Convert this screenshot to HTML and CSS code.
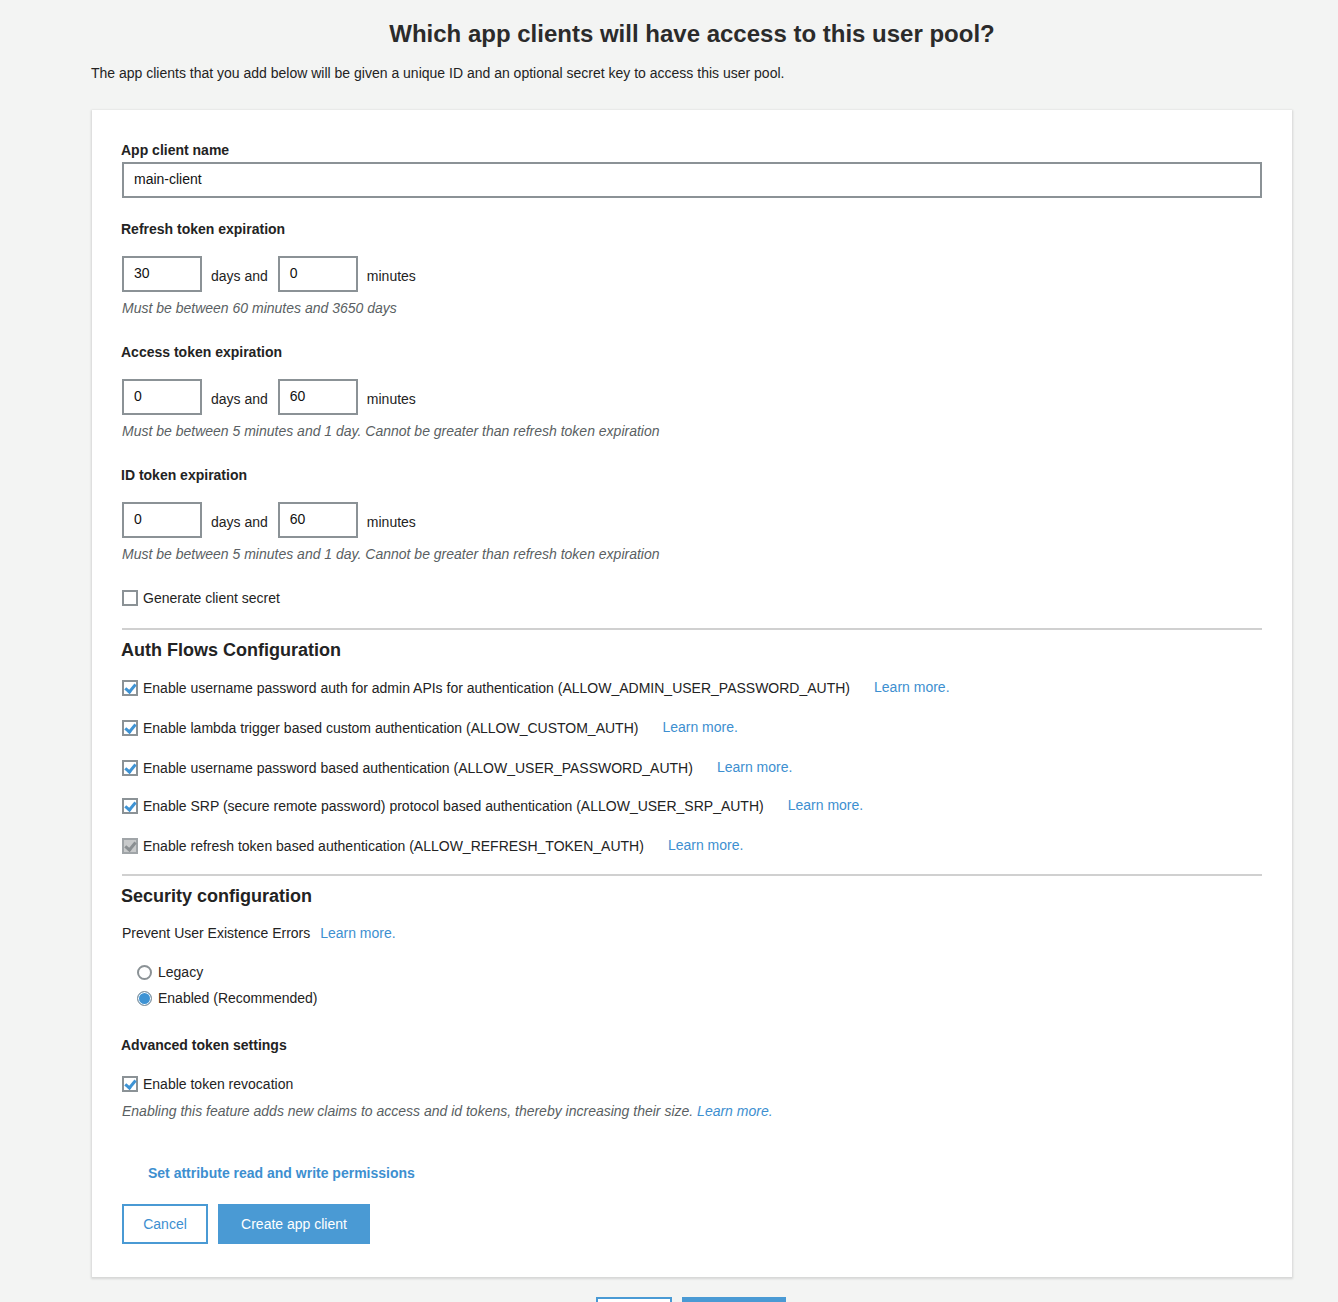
FILE: index.html
```html
<!DOCTYPE html>
<html>
    <head>
        <meta charset="UTF-8">
        <title>App clients</title>
        <link rel="stylesheet" href="styles.css">
    </head>
    <body>
        <div class="page">
            <h1 class="title">Which app clients will have access to this user pool?</h1>
            <p class="intro">The app clients that you add below will be given a unique ID and an optional secret key to access this user pool.</p>

            <div class="card">
                <div class="field first">
                    <div class="label">App client name</div>
                    <div class="textbox wide">main-client</div>
                </div>

                <div class="field">
                    <div class="label">Refresh token expiration</div>
                    <div class="duration">
                        <div class="textbox small">30</div>
                        <span>days and</span>
                        <div class="textbox small">0</div>
                        <span>minutes</span>
                    </div>
                    <div class="hint">Must be between 60 minutes and 3650 days</div>
                </div>

                <div class="field">
                    <div class="label">Access token expiration</div>
                    <div class="duration">
                        <div class="textbox small">0</div>
                        <span>days and</span>
                        <div class="textbox small">60</div>
                        <span>minutes</span>
                    </div>
                    <div class="hint">Must be between 5 minutes and 1 day. Cannot be greater than refresh token expiration</div>
                </div>

                <div class="field">
                    <div class="label">ID token expiration</div>
                    <div class="duration">
                        <div class="textbox small">0</div>
                        <span>days and</span>
                        <div class="textbox small">60</div>
                        <span>minutes</span>
                    </div>
                    <div class="hint">Must be between 5 minutes and 1 day. Cannot be greater than refresh token expiration</div>
                </div>

                <div class="check secret"><span class="box"></span>Generate client secret</div>

                <div class="section flows">
                    <h2>Auth Flows Configuration</h2>
                    <div class="flow"><div class="check"><span class="box on"></span>Enable username password auth for admin APIs for authentication (ALLOW_ADMIN_USER_PASSWORD_AUTH)</div><a class="link">Learn more.</a></div>
                    <div class="flow"><div class="check"><span class="box on"></span>Enable lambda trigger based custom authentication (ALLOW_CUSTOM_AUTH)</div><a class="link">Learn more.</a></div>
                    <div class="flow"><div class="check"><span class="box on"></span>Enable username password based authentication (ALLOW_USER_PASSWORD_AUTH)</div><a class="link">Learn more.</a></div>
                    <div class="flow tight"><div class="check"><span class="box on"></span>Enable SRP (secure remote password) protocol based authentication (ALLOW_USER_SRP_AUTH)</div><a class="link">Learn more.</a></div>
                    <div class="flow"><div class="check"><span class="box off"></span>Enable refresh token based authentication (ALLOW_REFRESH_TOKEN_AUTH)</div><a class="link">Learn more.</a></div>
                </div>

                <div class="section security">
                    <h2>Security configuration</h2>
                    <div class="prevent">Prevent User Existence Errors <a class="link">Learn more.</a></div>
                    <div class="radios">
                        <div class="radio"><span class="dot"></span>Legacy</div>
                        <div class="radio"><span class="dot on"></span>Enabled (Recommended)</div>
                    </div>
                    <div class="label advanced">Advanced token settings</div>
                    <div class="check revoke"><span class="box on"></span>Enable token revocation</div>
                    <div class="hint">Enabling this feature adds new claims to access and id tokens, thereby increasing their size. <a class="link">Learn more.</a></div>
                </div>

                <a class="perms">Set attribute read and write permissions</a>

                <div class="actions">
                    <button class="btn outline cancel">Cancel</button>
                    <button class="btn primary create">Create app client</button>
                </div>
            </div>

            <div class="pager">
                <button class="btn outline back">Back</button>
                <button class="btn primary next">Next step</button>
            </div>
        </div>
    </body>
</html>
```

FILE: styles.css
```css
body{
    margin: 0;
    background: #f3f4f3;
    font-family: "Liberation Sans", Arial, sans-serif;
    color: #232323;
    font-size: 14px;
}

.page{
    width: 1200px;
    margin-left: 92px;
}

.title{
    margin: 0;
    padding-top: 20px;
    text-align: center;
    font-size: 24px;
    font-weight: bold;
    color: #2b2b2b;
    line-height: 28px;
}

.intro{
    margin: 16px 0 0 -1px;
    font-size: 14px;
    line-height: 18px;
}

.card{
    margin-top: 28px;
    background: #fff;
    box-shadow: 0 1px 2px 1px rgba(0,0,0,0.12);
    padding: 31px 30px 33px 30px;
}

/* form fields */
.label{
    font-weight: bold;
    line-height: 18px;
    margin-left: -1px;
}

.field{
    margin-bottom: 26px;
}

.field.first{
    margin-bottom: 22px;
}

.textbox{
    box-sizing: border-box;
    height: 36px;
    border: 2px solid #8b9296;
    padding: 0 10px;
    line-height: 31px;
    font-size: 14px;
    color: #111;
}

.wide{
    margin-top: 3px;
    width: 1140px;
}

.duration{
    display: flex;
    align-items: center;
    margin-top: 18px;
}

.small{
    width: 80px;
    line-height: 30px;
}

.duration span{
    margin: 4px 10px 0 9px;
}

.hint{
    font-style: italic;
    color: #5a5f63;
    line-height: 18px;
    margin-top: 7px;
}

/* checkboxes */
.check{
    display: flex;
    align-items: center;
    line-height: 18px;
}

.box{
    box-sizing: border-box;
    width: 16px;
    height: 16px;
    border: 2px solid #8b9296;
    margin-right: 5px;
    position: relative;
    background: #fff;
    flex: none;
}

.box.on::after, .box.off::after{
    content: "";
    position: absolute;
    left: 3px;
    top: 0px;
    width: 4px;
    height: 8px;
    border: solid #3e93d4;
    border-width: 0 3px 3px 0;
    transform: rotate(40deg);
}

.box.off{
    background: #c8cacb;
    border-color: #a0a5a8;
}

.box.off::after{
    border-color: #8a8f92;
}

.secret{
    margin-top: 1px;
    padding-bottom: 21px;
    border-bottom: 2px solid #d0d0d0;
}

/* sections */
.section h2{
    margin: 0;
    font-size: 18px;
    line-height: 22px;
    padding-top: 9px;
    margin-left: -1px;
}

.flows{
    padding-bottom: 19px;
    border-bottom: 2px solid #d0d0d0;
}

.flow{
    display: flex;
    align-items: center;
    margin-top: 18px;
}

.flow + .flow{
    margin-top: 22px;
}

.flow.tight{
    margin-top: 20px;
}

.link{
    color: #3d8fd0;
    cursor: pointer;
    font-size: 14px;
}

.flow .link{
    margin-left: 24px;
    margin-top: -2px;
}

.prevent{
    margin-top: 17px;
    line-height: 18px;
}

.prevent .link{
    margin-left: 6px;
}

.radios{
    display: flex;
    flex-direction: column;
    gap: 8px;
    margin-top: 21px;
    margin-left: 15px;
}

.radio{
    display: flex;
    align-items: center;
    line-height: 18px;
}

.dot{
    box-sizing: border-box;
    width: 15px;
    height: 15px;
    border-radius: 50%;
    border: 2px solid #8b9296;
    margin-right: 6px;
    background: #fff;
}

.dot.on{
    background: #3e93d4;
    border-width: 1px;
    box-shadow: inset 0 0 0 1px #fff;
}

.advanced{
    margin-top: 29px;
}

.revoke{
    margin-top: 21px;
}

.security .hint{
    margin-top: 9px;
}

.perms{
    display: block;
    margin: 44px 0 0 26px;
    font-weight: bold;
    color: #3d8fd0;
    font-size: 14px;
    line-height: 18px;
}

/* buttons */
.actions{
    display: flex;
    gap: 10px;
    margin-top: 22px;
}

.btn{
    box-sizing: border-box;
    height: 40px;
    font-family: "Liberation Sans", Arial, sans-serif;
    font-size: 14px;
    padding: 0;
    cursor: pointer;
    border: 2px solid #4a9ad4;
    border-radius: 0;
}

.outline{
    background: #fff;
    color: #3d8fd0;
}

.primary{
    background: #4a9ad4;
    color: #fff;
}

.cancel{
    width: 86px;
}

.create{
    width: 152px;
}

.pager{
    display: flex;
    justify-content: center;
    gap: 10px;
    margin-top: 20px;
    padding-right: 2px;
}

.back{
    width: 76px;
}

.next{
    width: 104px;
}
```
